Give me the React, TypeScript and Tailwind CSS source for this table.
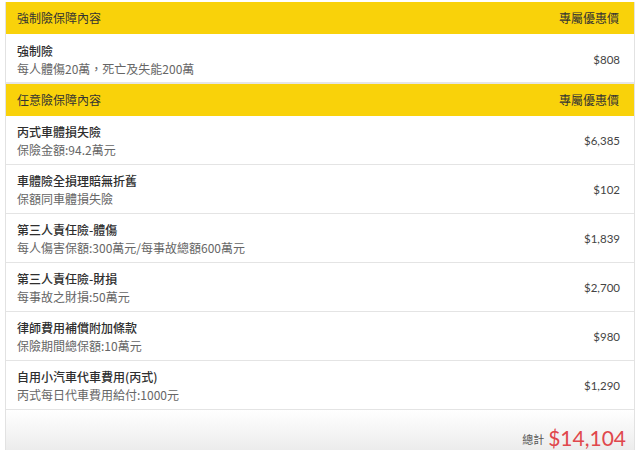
import React from 'react'

const compulsory = [
  { title: '強制險', detail: '每人體傷20萬，死亡及失能200萬', price: '$808' },
]

const optional = [
  { title: '丙式車體損失險', detail: '保險金額:94.2萬元', price: '$6,385' },
  { title: '車體險全損理賠無折舊', detail: '保額同車體損失險', price: '$102' },
  { title: '第三人責任險-體傷', detail: '每人傷害保額:300萬元/每事故總額600萬元', price: '$1,839' },
  { title: '第三人責任險-財損', detail: '每事故之財損:50萬元', price: '$2,700' },
  { title: '律師費用補償附加條款', detail: '保險期間總保額:10萬元', price: '$980' },
  { title: '自用小汽車代車費用(丙式)', detail: '丙式每日代車費用給付:1000元', price: '$1,290' },
]

const cjk = "font-['Noto_Sans_CJK_TC','Noto_Sans',sans-serif]"
const num = "font-['Lato','Noto_Sans_CJK_TC',sans-serif]"

function Header({ label }: { label: string }) {
  return (
    <div className="h-[32px] bg-[#f9d20a] flex items-center justify-between pl-[11px] pr-[15px] text-[12px] text-[#333]">
      <span>{label}</span>
      <span>專屬優惠價</span>
    </div>
  )
}

function Row({ title, detail, price, last }: { title: string; detail: string; price: string; last?: boolean }) {
  return (
    <div className={`flex items-center justify-between pl-[11px] pr-[14px] ${last ? 'pt-[8px] pb-[4px] border-b-2 border-[#e6e6e6]' : 'pt-[7px] pb-[5px] border-b border-[#e4e4e4]'}`}>
      <div className="leading-[18px]">
        <div className="text-[12px] text-[#2e2e2e] font-medium">{title}</div>
        <div className="text-[12px] text-[#666]">{detail}</div>
      </div>
      <div className={`${num} text-[11.5px] text-[#444]`}>{price}</div>
    </div>
  )
}

export default function App() {
  return (
    <div className={`${cjk} bg-white w-[640px] h-[450px] overflow-hidden px-[5px] pt-[2px]`}>
      <div className="border-x border-[#e2e2e2]">
        <Header label="強制險保障內容" />
        {compulsory.map((r) => (
          <Row key={r.title} {...r} last />
        ))}
        <Header label="任意險保障內容" />
        {optional.map((r) => (
          <Row key={r.title} {...r} />
        ))}
        <div className="h-[40px] bg-gradient-to-b from-white to-[#ececec] flex items-end justify-end pr-[8px] pb-[2px] gap-[4px]">
          <span className="text-[11px] leading-[14px] text-[#555] mb-[2px]">總計</span>
          <span className={`${num} text-[21px] leading-none text-[#e0474c]`}>$14,104</span>
        </div>
      </div>
    </div>
  )
}
